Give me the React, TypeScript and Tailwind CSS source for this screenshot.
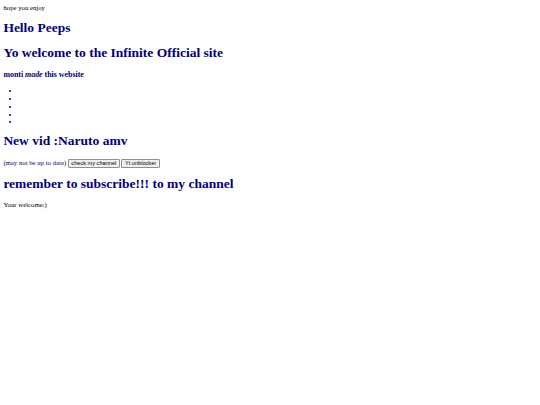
import React from 'react';

// page drawn at 0.421875 of its 1280px layout, so every size is scaled by hand
const links = ['check my channel', 'Yt unblocker'];

const Heading: React.FC<{ children: React.ReactNode; top?: string; bottom?: string }> = ({
  children,
  top = 'mt-[9.045px]',
  bottom = 'mb-[9.045px]',
}) => (
  <h1 className={`text-[13.5px] leading-[normal] font-bold text-[#000080] ${top} ${bottom}`}>{children}</h1>
);

export default function App() {
  return (
    <div className="w-[540px] h-[405px] bg-white px-[3.375px] pt-[3.9px] font-['Liberation_Serif',serif] text-[6.75px] leading-[normal] text-black">
      hope you enjoy
      <Heading top="mt-[9.5px]">Hello Peeps</Heading>
      <Heading>Yo welcome to the Infinite Official site</Heading>
      <h3 className="text-[7.9px] leading-[normal] font-bold text-[#000080] mt-[8.4px] mb-[7.9px]">
        monti <i>made</i> this website
      </h3>
      <ul className="list-disc pl-[16.875px] mt-[6.75px] mb-0 text-[#000080]">
        {[0, 1, 2, 3, 4].map(i => (
          <li key={i} className="h-[7.76px]"></li>
        ))}
      </ul>
      <Heading top="mt-[6.9px]" bottom="mb-[10px]">New vid :Naruto amv</Heading>
      <div className="text-[#000080]">
        (may not be up to date){' '}
        {links.map(label => (
          <React.Fragment key={label}>
            <button className="bg-[#efefef] border border-[#8f8f8f] rounded-[1px] px-[2.5px] py-[0.42px] font-['Liberation_Sans',Arial,sans-serif] text-[5.625px] leading-[normal] text-black">
              {label}
            </button>{' '}
          </React.Fragment>
        ))}
      </div>
      <Heading top="mt-[8.5px]">remember to subscribe!!! to my channel</Heading>
      <p className="my-[6.75px]">Your welcome:)</p>
    </div>
  );
}
